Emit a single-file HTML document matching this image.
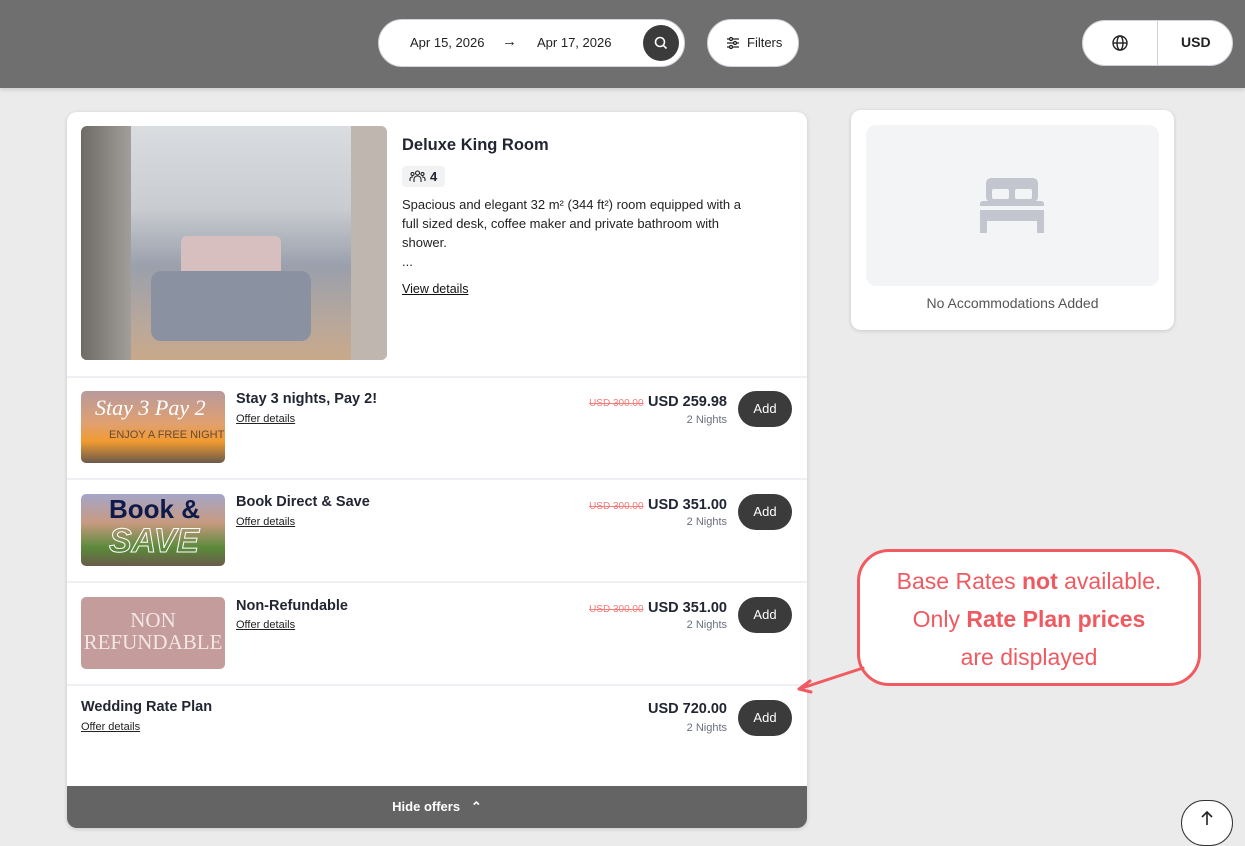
<!DOCTYPE html>
<html><head><meta charset="utf-8"><style>
*{box-sizing:border-box;margin:0;padding:0}
body{width:1245px;height:836px;overflow:hidden;background:#ebebeb;font-family:"Liberation Sans",sans-serif;color:#1f2230;position:relative}
.hdr{position:absolute;left:0;top:0;width:1245px;height:88px;background:#6f6f6f;box-shadow:0 2px 4px rgba(0,0,0,.12)}
.pill{position:absolute;background:#fff;border:1px solid #d0d3da;border-radius:24px}
.abs{position:absolute}
.card{position:absolute;background:#fff;border-radius:10px;box-shadow:0 1px 4px rgba(0,0,0,.15)}
.hr{position:absolute;left:67px;width:740px;height:2px;background:#eef0f3}
.t{font-weight:bold;font-size:14.5px;color:#222633}
.od{font-size:11px;text-decoration:underline;color:#222}
.old{font-size:10px;color:#f27b7b;text-decoration:line-through}
.pr{font-weight:bold;font-size:14.5px;color:#222633}
.n{font-size:11px;color:#6b7080}
.rt{position:absolute;right:518px;text-align:right;white-space:nowrap}
.add{position:absolute;left:738px;width:54px;height:36px;border-radius:18px;background:#3b3b3b;color:#fff;font-size:13px;text-align:center;line-height:36px}
.thumb{position:absolute;left:81px;width:144px;height:72px;border-radius:5px;overflow:hidden}
</style></head><body>
<div class="hdr"></div>
<div class="pill" style="left:378px;top:19px;width:307px;height:48px"></div>
<div class="abs" style="left:410px;top:35px;font-size:13px;color:#222">Apr 15, 2026</div>
<div class="abs" style="left:502px;top:33px;font-size:15px;color:#222">→</div>
<div class="abs" style="left:537px;top:35px;font-size:13px;color:#222">Apr 17, 2026</div>
<div class="abs" style="left:643px;top:25px;width:36px;height:36px;border-radius:50%;background:#3b3b3b"></div>
<svg class="abs" style="left:653px;top:35px" width="16" height="16" viewBox="0 0 16 16"><circle cx="7" cy="7" r="4.5" stroke="#fff" stroke-width="1.6" fill="none"/><path d="M10.3 10.3L13.5 13.5" stroke="#fff" stroke-width="1.6"/></svg>
<div class="pill" style="left:707px;top:19px;width:92px;height:48px"></div>
<svg class="abs" style="left:726px;top:36px" width="14" height="14" viewBox="0 0 14 14" stroke="#222" stroke-width="1.3"><path d="M1 3H13M1 7H13M1 11H13"/><circle cx="5" cy="3" r="1.5" fill="#fff"/><circle cx="9" cy="7" r="1.5" fill="#fff"/><circle cx="5" cy="11" r="1.5" fill="#fff"/></svg>
<div class="abs" style="left:747px;top:35px;font-size:13px;color:#222">Filters</div>
<div class="pill" style="left:1082px;top:20px;width:151px;height:46px"></div>
<div class="abs" style="left:1157px;top:21px;width:1px;height:44px;background:#d0d3da"></div>
<svg class="abs" style="left:1111px;top:34px" width="18" height="18" viewBox="0 0 18 18" fill="none" stroke="#222" stroke-width="1.4"><circle cx="9" cy="9" r="7"/><ellipse cx="9" cy="9" rx="3" ry="7"/><path d="M2 9H16"/></svg>
<div class="abs" style="left:1181px;top:34px;font-size:14px;font-weight:bold;color:#222">USD</div>

<div class="card" style="left:67px;top:112px;width:740px;height:716px;overflow:hidden">
 <div style="position:absolute;left:0;bottom:0;width:740px;height:42px;background:#646464;color:#fff;font-size:13px;font-weight:bold;text-align:center;line-height:42px">Hide offers &nbsp;&nbsp;⌃</div>
</div>
<div class="abs" style="left:81px;top:126px;width:306px;height:234px;border-radius:6px;background:linear-gradient(180deg,#d9dde0 0%,#c9ccd0 35%,#9aa0ac 60%,#b9a89a 85%,#c9a98a 100%);overflow:hidden">
 <div style="position:absolute;left:0;top:0;width:50px;height:234px;background:linear-gradient(90deg,#6e6a66,#a29e9a)"></div>
 <div style="position:absolute;left:270px;top:0;width:36px;height:234px;background:#bfb6b0"></div>
 <div style="position:absolute;left:100px;top:110px;width:100px;height:40px;background:#d8bfbf;border-radius:6px"></div>
 <div style="position:absolute;left:70px;top:145px;width:160px;height:70px;background:#8a91a0;border-radius:10px"></div>
</div>
<div class="abs" style="left:402px;top:136px;font-size:16.5px;font-weight:bold;color:#222633">Deluxe King Room</div>
<div class="abs" style="left:402px;top:166px;width:43px;height:21px;background:#f1f2f4;border-radius:4px;font-size:13px;font-weight:bold;padding:3px 0 0 28px">4</div>
<svg class="abs" style="left:409px;top:170px" width="17" height="13" viewBox="0 0 17 13" fill="none" stroke="#222" stroke-width="1.1"><circle cx="8.5" cy="3" r="2"/><circle cx="3.5" cy="4" r="1.5"/><circle cx="13.5" cy="4" r="1.5"/><path d="M5 12V9a3.5 3 0 0 1 7 0v3M1 11V9a2.5 2 0 0 1 3-2M16 11V9a2.5 2 0 0 0-3-2"/></svg>
<div class="abs" style="left:402px;top:195px;width:400px;font-size:13px;line-height:19px;color:#222;white-space:nowrap">Spacious and elegant 32 m² (344 ft²) room equipped with a<br>full sized desk, coffee maker and private bathroom with<br>shower.<br>...</div>
<div class="abs" style="left:402px;top:282px;font-size:12.5px;text-decoration:underline;color:#111">View details</div>

<div class="hr" style="top:376px"></div><div class="hr" style="top:478px"></div><div class="hr" style="top:581px"></div><div class="hr" style="top:684px"></div>

<div class="thumb" style="top:391px;background:linear-gradient(180deg,#b89a9c 0%,#e0a070 45%,#f09a30 70%,#6b5a4a 100%)"><div style="position:absolute;left:14px;top:4px;color:#fff;font-style:italic;font-size:22px;font-family:'Liberation Serif',serif">Stay 3 Pay 2</div><div style="position:absolute;left:28px;top:38px;color:#6a4a30;font-size:11px">ENJOY A FREE NIGHT</div></div>
<div class="abs t" style="left:236px;top:391px">Stay 3 nights, Pay 2!</div>
<div class="abs od" style="left:236px;top:413px">Offer details</div>
<div class="rt" style="top:393px"><span class="old">USD 300.00</span> <span class="pr">USD 259.98</span></div>
<div class="rt n" style="top:414px">2 Nights</div>
<div class="add" style="top:391px">Add</div>

<div class="thumb" style="top:494px;background:linear-gradient(180deg,#a4a6c8 0%,#c89a80 40%,#5a8a3a 75%,#6a5a4a 100%)"><div style="position:absolute;left:28px;top:0px;color:#0d1a4a;font-weight:bold;font-size:26px">Book &amp;</div><div style="position:absolute;left:28px;top:28px;color:transparent;-webkit-text-stroke:1px #fff;font-weight:bold;font-size:34px;font-style:italic">SAVE</div></div>
<div class="abs t" style="left:236px;top:494px">Book Direct &amp; Save</div>
<div class="abs od" style="left:236px;top:516px">Offer details</div>
<div class="rt" style="top:496px"><span class="old">USD 300.00</span> <span class="pr">USD 351.00</span></div>
<div class="rt n" style="top:516px">2 Nights</div>
<div class="add" style="top:494px">Add</div>

<div class="thumb" style="top:597px;background:#c39c9b;color:#f3e6e4;font-family:'Liberation Serif',serif;font-size:21px;text-align:center;line-height:22px;padding-top:12px">NON<br>REFUNDABLE</div>
<div class="abs t" style="left:236px;top:598px">Non-Refundable</div>
<div class="abs od" style="left:236px;top:619px">Offer details</div>
<div class="rt" style="top:599px"><span class="old">USD 300.00</span> <span class="pr">USD 351.00</span></div>
<div class="rt n" style="top:619px">2 Nights</div>
<div class="add" style="top:597px">Add</div>

<div class="abs t" style="left:81px;top:699px">Wedding Rate Plan</div>
<div class="abs od" style="left:81px;top:721px">Offer details</div>
<div class="rt pr" style="top:701px">USD 720.00</div>
<div class="rt n" style="top:722px">2 Nights</div>
<div class="add" style="top:700px">Add</div>

<div class="card" style="left:851px;top:110px;width:323px;height:220px"></div>
<div class="abs" style="left:866px;top:125px;width:293px;height:161px;background:#f3f4f6;border-radius:10px"></div>
<svg class="abs" style="left:980px;top:177px" width="64" height="56" viewBox="0 0 64 56" fill="#c3c6cf"><rect x="6" y="1" width="52" height="24" rx="5"/><rect x="0" y="24" width="64" height="20" rx="3"/><rect x="0" y="42" width="7" height="14"/><rect x="57" y="42" width="7" height="14"/><rect x="12" y="12" width="17" height="10" rx="2" fill="#f3f4f6"/><rect x="35" y="12" width="17" height="10" rx="2" fill="#f3f4f6"/><rect x="0" y="29" width="64" height="4" fill="#f3f4f6"/></svg>
<div class="abs" style="left:851px;top:295px;width:323px;text-align:center;font-size:14px;color:#555">No Accommodations Added</div>

<div class="abs" style="left:857px;top:549px;width:344px;height:137px;border:3px solid #f05a60;border-radius:32px;background:#fff;color:#ef5a61;font-size:23px;text-align:center;line-height:38px;padding-top:10px">Base Rates <b>not</b> available.<br>Only <b>Rate Plan prices</b><br>are displayed</div>
<svg class="abs" style="left:795px;top:664px" width="72" height="30" viewBox="0 0 72 30"><path d="M68 4L4 25M4 25L15 17M4 25L16 28" stroke="#f05a60" stroke-width="3" fill="none" stroke-linecap="round"/></svg>

<div class="abs" style="left:1181px;top:800px;width:52px;height:46px;border-radius:24px;background:#fff;border:1px solid #333"></div>
<svg class="abs" style="left:1200px;top:810px" width="14" height="16" viewBox="0 0 14 16" fill="none" stroke="#222" stroke-width="1.6"><path d="M7 15V2M2 7L7 2L12 7"/></svg>
</body></html>
